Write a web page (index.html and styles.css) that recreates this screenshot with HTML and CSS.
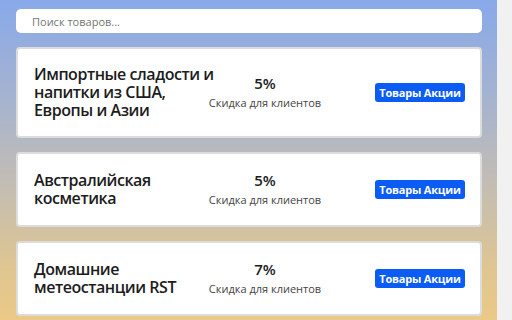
FILE: index.html
```html
<!DOCTYPE html>
<html lang="ru">
<head>
<meta charset="utf-8">
<link rel="stylesheet" href="styles.css">
</head>
<body>
<div class="page">
  <main class="content">
    <div class="search">Поиск товаров...</div>
    <div class="card">
      <div class="title">Импортные сладости и напитки из США, Европы и Азии</div>
      <div class="discount"><div class="pct">5%</div><div class="note">Скидка для клиентов</div></div>
      <a class="btn">Товары Акции</a>
    </div>
    <div class="card">
      <div class="title">Австралийская косметика</div>
      <div class="discount"><div class="pct">5%</div><div class="note">Скидка для клиентов</div></div>
      <a class="btn">Товары Акции</a>
    </div>
    <div class="card">
      <div class="title">Домашние метеостанции RST</div>
      <div class="discount"><div class="pct">7%</div><div class="note">Скидка для клиентов</div></div>
      <a class="btn">Товары Акции</a>
    </div>
  </main>
  <div class="scrollbar"></div>
</div>
</body>
</html>
```
FILE: styles.css
```css
html, body {
  margin: 0;
  padding: 0;
  height: 100%;
}
body {
  font-family: "Open Sans", "Noto Sans", sans-serif;
  overflow: hidden;
}
.page {
  display: flex;
  width: 512px;
  height: 320px;
}
.content {
  flex: 1;
  background: linear-gradient(180deg, #89a9ea 0%, #a4b3d0 30%, #c0bcb6 55%, #e0c690 85%, #ebc987 100%);
  padding: 9px 15px 0 16px;
  display: flex;
  flex-direction: column;
  gap: 14px;
}
.scrollbar {
  width: 15px;
  background: #f1f1f1;
}
.search {
  flex-shrink: 0;
  height: 24px;
  background: #fff;
  border-radius: 5px;
  padding-left: 16px;
  display: flex;
  align-items: center;
  font-size: 11px;
  color: #757575;
}
.card {
  flex-shrink: 0;
  background: #fff;
  border: 2px solid #dcdcdc;
  border-radius: 4px;
  padding: 16px 15px 17px 16px;
  display: flex;
  align-items: center;
}
.title {
  width: 184px;
  font-size: 16px;
  font-weight: 600;
  line-height: 18px;
  color: #1c1c1c;
  letter-spacing: -0.45px;
}
.discount {
  width: 94px;
  margin-right: 63px;
  display: flex;
  flex-direction: column;
  align-items: center;
}
.pct {
  font-size: 15px;
  font-weight: 600;
  color: #1c1c1c;
  line-height: 20px;
}
.note {
  font-size: 11px;
  color: #444;
  line-height: 16px;
  margin-top: 2px;
  white-space: nowrap;
}
.btn {
  width: 90px;
  height: 19px;
  background: #0a5cf5;
  color: #fff;
  border-radius: 3px;
  font-size: 11px;
  font-weight: 700;
  display: flex;
  align-items: center;
  justify-content: center;
  letter-spacing: -0.2px;
}
```
